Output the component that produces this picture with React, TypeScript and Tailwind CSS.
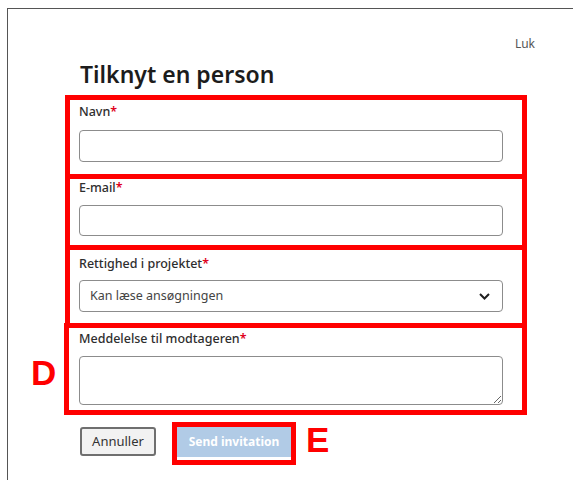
function Field({
  label,
  className,
  gap,
  children,
}: {
  label: string;
  className: string;
  gap: string;
  children: React.ReactNode;
}) {
  return (
    <div className={"border-[5px] border-[#ff0000] " + className}>
      <div className="text-[12.5px] leading-[18px] font-medium text-[#2e2e2e]">
        {label}
        <span className="text-[#e0001b] font-semibold">*</span>
      </div>
      <div className={gap}>{children}</div>
    </div>
  );
}

function App() {
  return (
    <div className="w-[580px] h-[480px] overflow-hidden bg-white font-['Noto_Sans',sans-serif]">
      <div className="ml-[7px] mt-[8px] w-[566px] h-[472px] border-l border-t border-[#555]">
        <div className="flex justify-end pr-[38px] pt-[27px]">
          <span className="text-[12px] leading-[16px] text-[#555]">Luk</span>
        </div>
        <h1 className="ml-[72px] mt-[8px] text-[23px] leading-[28px] font-semibold text-[#1c1c1c]">
          Tilknyt en person
        </h1>

        <div className="mt-[7px]">
          <div className="flex">
            <div className="w-[57px] shrink-0" />
            <Field label="Navn" className="w-[462px] pt-[3px] pb-[12px] pl-[9px] pr-[19px]" gap="mt-[9px]">
              <input className="block w-full h-[32px] rounded-[4px] border border-[#8c8c8c] bg-white px-[10px] outline-none" />
            </Field>
          </div>
          <div className="flex -mt-[5px]">
            <div className="w-[57px] shrink-0" />
            <Field label="E-mail" className="w-[462px] pt-0 pb-[9px] pl-[9px] pr-[19px]" gap="mt-[8px]">
              <input className="block w-full h-[31px] rounded-[4px] border border-[#8c8c8c] bg-white px-[10px] outline-none" />
            </Field>
          </div>
          <div className="flex -mt-[5px]">
            <div className="w-[57px] shrink-0" />
            <Field
              label="Rettighed i projektet"
              className="w-[462px] pt-[5px] pb-[11px] pl-[9px] pr-[19px]"
              gap="mt-[7px]"
            >
              <div className="flex items-center justify-between h-[32px] rounded-[4px] border border-[#8c8c8c] bg-white pl-[10px] pr-[12px]">
                <span className="text-[12.5px] text-[#444]">Kan læse ansøgningen</span>
                <svg width="11" height="7" viewBox="0 0 11 7" fill="none">
                  <path d="M1 1l4.5 4.5L10 1" stroke="#1f1f1f" strokeWidth="2" />
                </svg>
              </div>
            </Field>
          </div>
          <div className="flex -mt-[5px]">
            <div className="w-[56px] shrink-0 pl-[23px] pt-[32px]">
              <span className="block font-['Liberation_Sans',sans-serif] font-bold text-[35px] leading-none text-[#ff0000]">
                D
              </span>
            </div>
            <Field
              label="Meddelelse til modtageren"
              className="w-[463px] pt-[2px] pb-[5px] pl-[10px] pr-[19px]"
              gap="mt-[8px]"
            >
              <textarea className="block w-full h-[49px] rounded-[4px] border border-[#8c8c8c] bg-white px-[10px] outline-none" />
            </Field>
          </div>
        </div>

        <div className="flex items-start mt-[7px] ml-[72px]">
          <button className="mt-[5px] w-[76px] h-[29px] rounded-[3px] border-2 border-[#6f6f6f] bg-[#f2f2f2] text-[13px] text-[#333]">
            Annuller
          </button>
          <div className="ml-[16px] border-[5px] border-[#ff0000] pb-[3px]">
            <div className="flex items-center justify-center w-[114px] h-[30px] bg-[#b1cbe6] text-[12px] font-bold text-white">
              Send invitation
            </div>
          </div>
          <span className="ml-[10px] font-['Liberation_Sans',sans-serif] font-bold text-[35px] leading-none text-[#ff0000]">
            E
          </span>
        </div>
      </div>
    </div>
  );
}

export default App;
